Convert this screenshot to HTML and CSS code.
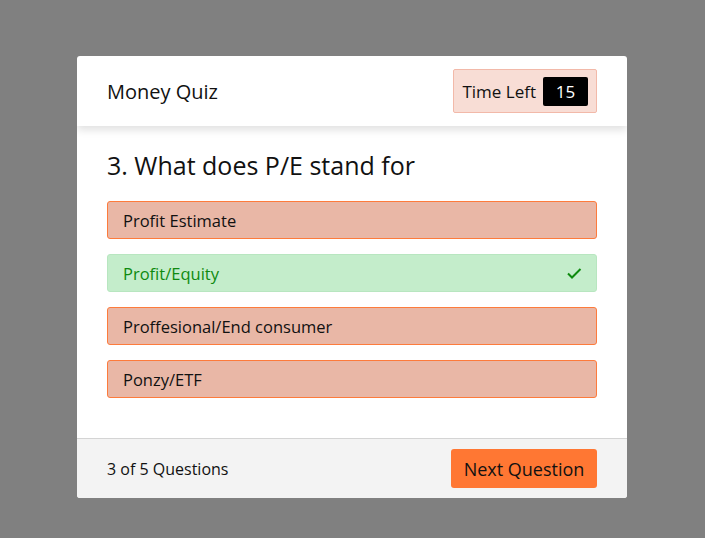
FILE: index.html
```html
<!DOCTYPE html>
<html>
<head>
<meta charset="utf-8">
<link rel="stylesheet" href="styles.css">
</head>
<body>
<div class="quiz">
  <header class="quiz-header">
    <div class="title">Money Quiz</div>
    <div class="timer">
      <span class="timer-label">Time Left</span>
      <span class="timer-value">15</span>
    </div>
  </header>
  <main class="quiz-body">
    <h2 class="question">3. What does P/E stand for</h2>
    <div class="options">
      <div class="option wrong">Profit Estimate</div>
      <div class="option correct">Profit/Equity
        <svg class="check" width="16" height="16" viewBox="0 0 16 16"><path d="M2 8.5 L6 12.5 L14.5 4" fill="none" stroke="#0e8a0e" stroke-width="2"/></svg>
      </div>
      <div class="option wrong">Proffesional/End consumer</div>
      <div class="option wrong">Ponzy/ETF</div>
    </div>
  </main>
  <footer class="quiz-footer">
    <div class="count">3 of 5 Questions</div>
    <button class="next">Next Question</button>
  </footer>
</div>
</body>
</html>
```
FILE: styles.css
```css
html, body {
  margin: 0;
  padding: 0;
}
body {
  background: #808080;
  font-family: "Open Sans", "Lato", sans-serif;
  color: #111;
  padding-top: 56px;
  height: 538px;
  box-sizing: border-box;
}
.quiz {
  width: 550px;
  margin-left: 77px;
  background: #fff;
  border-radius: 3px;
  overflow: hidden;
}
.quiz-header {
  height: 70px;
  display: flex;
  align-items: center;
  justify-content: space-between;
  padding: 0 30px;
  box-shadow: 0 4px 8px rgba(0,0,0,0.12);
  position: relative;
}
.title {
  font-size: 20px;
}
.timer {
  display: flex;
  align-items: center;
  gap: 7px;
  height: 44px;
  box-sizing: border-box;
  padding: 0 8px 0 8px;
  background: #f8ddd5;
  border: 1px solid #f2b9a9;
  border-radius: 2px;
  font-size: 17px;
}
.timer-value {
  background: #000;
  color: #fff;
  width: 45px;
  height: 29px;
  display: flex;
  align-items: center;
  justify-content: center;
  border-radius: 2px;
  font-size: 17px;
}
.quiz-body {
  padding: 24px 30px 40px;
}
.question {
  margin: 0 0 21px;
  font-weight: 400;
  font-size: 25px;
  line-height: 30px;
}
.options {
  display: flex;
  flex-direction: column;
  gap: 15px;
}
.option {
  height: 38px;
  box-sizing: border-box;
  border-radius: 3px;
  padding: 0 15px;
  display: flex;
  align-items: center;
  justify-content: space-between;
  font-size: 16.5px;
}
.option.wrong {
  background: #e9b7a6;
  border: 1px solid #fd7b3c;
}
.option.correct {
  background: #c4edcb;
  border: 1px solid #b8e6c0;
  color: #0f8a0f;
}
.check {
  margin-right: -1px;
}
.quiz-footer {
  height: 60px;
  box-sizing: border-box;
  background: #f3f3f3;
  border-top: 1px solid #d4d4d4;
  display: flex;
  align-items: center;
  justify-content: space-between;
  padding: 0 30px;
}
.count {
  font-size: 16px;
}
.next {
  font-family: inherit;
  background: #ff7733;
  border: none;
  border-radius: 3px;
  height: 39px;
  width: 146px;
  font-size: 18px;
  color: #111;
  padding: 0;
}
```
